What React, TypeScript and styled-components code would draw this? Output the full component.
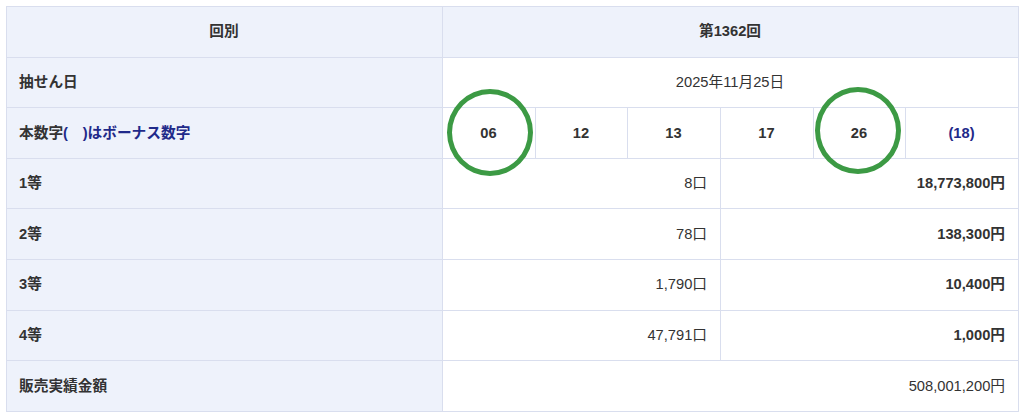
import React from "react";
import styled, { createGlobalStyle } from "styled-components";

const Global = createGlobalStyle`
  html, body { margin: 0; padding: 0; background: #ffffff; }
  body { font-family: "Liberation Sans", "Noto Sans CJK JP", sans-serif; }
`;

const Page = styled.div`
  padding: 6px 6px 0 6px;
  width: 1012px;
  position: relative;
`;

const Table = styled.table`
  width: 1012px;
  border-collapse: collapse;
  table-layout: fixed;
  font-size: 14.7px;
  color: #333333;
`;

const Row = styled.tr`
  height: 50.6px;
`;

const Cell = styled.td<{ $align?: "left" | "center" | "right"; $bold?: boolean; $tint?: boolean; $navy?: boolean }>`
  border: 1px solid #d9deee;
  background: ${(p) => (p.$tint ? "#eef2fb" : "#ffffff")};
  text-align: ${(p) => p.$align ?? "left"};
  font-weight: ${(p) => (p.$bold ? 700 : 400)};
  color: ${(p) => (p.$navy ? "#1f2a8a" : "#333333")};
  padding: 0 13px 0 12px;
  vertical-align: middle;
  line-height: 1;
  white-space: nowrap;
`;

const Navy = styled.span`
  color: #1f2a8a;
`;

const Ring = styled.div<{ $x: number; $y: number }>`
  position: absolute;
  left: ${(p) => p.$x - 43}px;
  top: ${(p) => p.$y - 43}px;
  width: 86px;
  height: 87px;
  box-sizing: border-box;
  border: 5px solid #3c9a44;
  border-radius: 50%;
  pointer-events: none;
`;

const numbers = ["06", "12", "13", "17", "26"];
const prizes = [
  { label: "1等", count: "8口", amount: "18,773,800円" },
  { label: "2等", count: "78口", amount: "138,300円" },
  { label: "3等", count: "1,790口", amount: "10,400円" },
  { label: "4等", count: "47,791口", amount: "1,000円" },
];

export default function App() {
  return (
    <Page>
      <Global />
      <Table>
        <colgroup>
          <col style={{ width: 436 }} />
          <col style={{ width: 93 }} />
          <col style={{ width: 92 }} />
          <col style={{ width: 93 }} />
          <col style={{ width: 93 }} />
          <col style={{ width: 92 }} />
          <col style={{ width: 113 }} />
        </colgroup>
        <tbody>
          <Row>
            <Cell $tint $bold $align="center">回別</Cell>
            <Cell $tint $bold $align="center" colSpan={6}>第1362回</Cell>
          </Row>
          <Row>
            <Cell $tint $bold>抽せん日</Cell>
            <Cell $align="center" colSpan={6}>2025年11月25日</Cell>
          </Row>
          <Row>
            <Cell $tint $bold>
              本数字<Navy>(　)はボーナス数字</Navy>
            </Cell>
            {numbers.map((n) => (
              <Cell key={n} $bold $align="center">{n}</Cell>
            ))}
            <Cell $bold $navy $align="center">(18)</Cell>
          </Row>
          {prizes.map((p) => (
            <Row key={p.label}>
              <Cell $tint $bold>{p.label}</Cell>
              <Cell $align="right" colSpan={3}>{p.count}</Cell>
              <Cell $bold $align="right" colSpan={3}>{p.amount}</Cell>
            </Row>
          ))}
          <Row>
            <Cell $tint $bold>販売実績金額</Cell>
            <Cell $align="right" colSpan={6}>508,001,200円</Cell>
          </Row>
        </tbody>
      </Table>
      <Ring $x={490} $y={132} />
      <Ring $x={858} $y={130} />
    </Page>
  );
}
